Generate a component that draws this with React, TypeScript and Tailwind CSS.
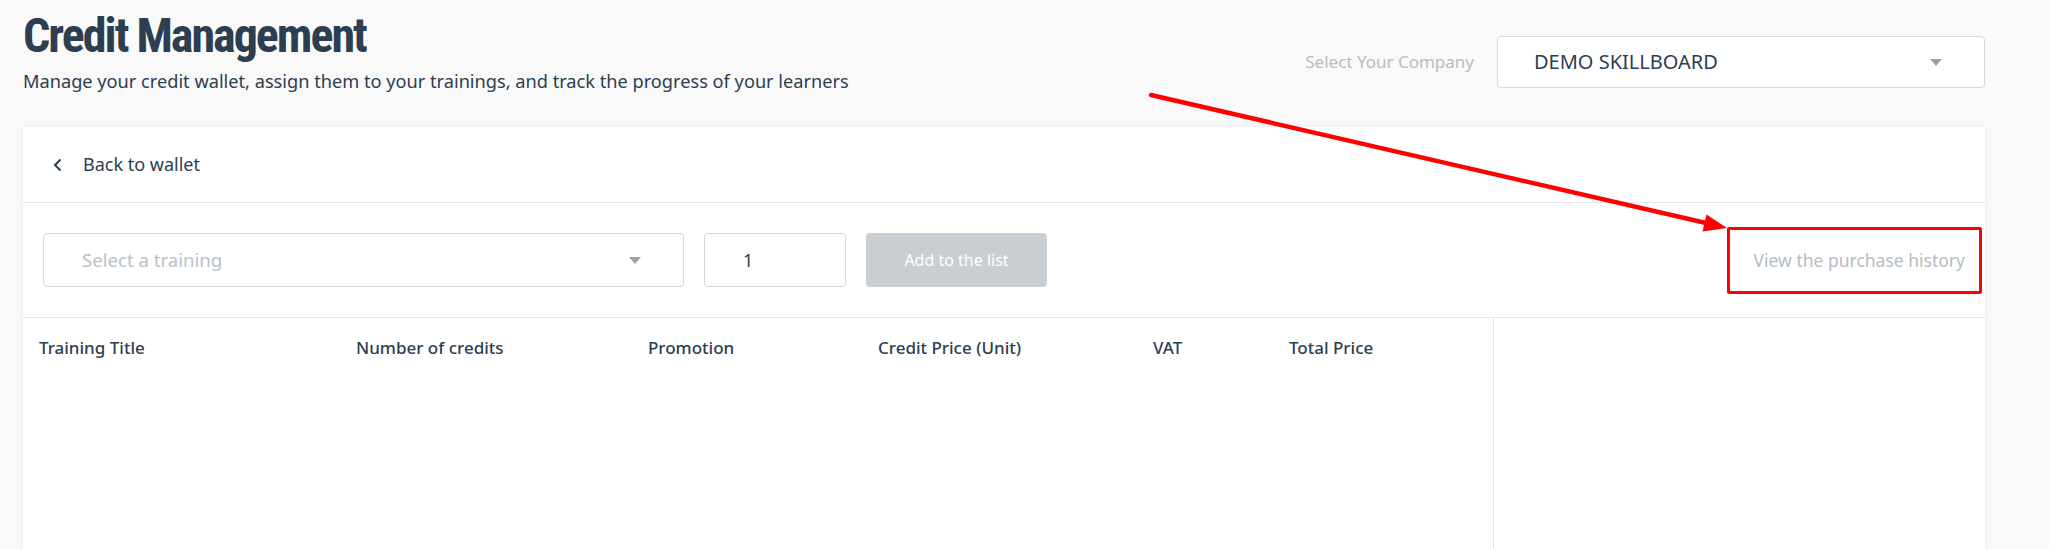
const columns = [
  "Training Title",
  "Number of credits",
  "Promotion",
  "Credit Price (Unit)",
  "VAT",
  "Total Price",
];

const Caret = () => (
  <svg width="12" height="7" viewBox="0 0 12 7" className="shrink-0">
    <polygon points="0,0 12,0 6,7" fill="#9aa1a8" />
  </svg>
);

const App = () => {
  return (
    <div className="relative flex h-[549px] flex-col overflow-hidden bg-[#f9f9f9] pl-[23px] pr-[64px] pt-[8px] font-['Noto_Sans',sans-serif] text-[#2c3e50]">
      <div className="flex items-start justify-between">
        <div>
          <h1 className="font-['Roboto_Condensed','Liberation_Sans',sans-serif] text-[48px] font-bold leading-[56px] tracking-[-2px] text-[#2c3e50]">
            Credit Management
          </h1>
          <p className="mt-[5px] text-[18.2px] leading-[24px]">
            Manage your credit wallet, assign them to your trainings, and track the progress of your learners
          </p>
        </div>
        <div className="mt-[28px] flex items-center gap-[23px]">
          <span className="text-[17px] text-[#b7bdc4]">Select Your Company</span>
          <div className="flex h-[52px] w-[488px] items-center justify-between rounded-[4px] border border-[#d3d8dd] bg-white pl-[36px] pr-[42px]">
            <span className="text-[20px]">DEMO SKILLBOARD</span>
            <Caret />
          </div>
        </div>
      </div>

      <div className="mt-[34px] flex flex-1 flex-col bg-white shadow-[0_0_6px_rgba(0,0,0,0.08)]">
        <div className="flex h-[76px] items-center gap-[20px] border-b border-[#e4e6e8] pl-[30px]">
          <svg width="10" height="14" viewBox="0 0 10 14" className="shrink-0">
            <polyline points="7.5,1.5 2,7 7.5,12.5" fill="none" stroke="#2c3e50" strokeWidth="2" />
          </svg>
          <span className="text-[18px]">Back to wallet</span>
        </div>

        <div className="flex h-[115px] items-center border-b border-[#e4e6e8] px-[20px]">
          <div className="flex h-[54px] w-[641px] items-center justify-between rounded-[4px] border border-[#d3d8dd] pl-[38px] pr-[42px]">
            <span className="text-[18.6px] text-[#b9c0c7]">Select a training</span>
            <Caret />
          </div>
          <div className="ml-[20px] flex h-[54px] w-[142px] items-center rounded-[4px] border border-[#d3d8dd] pl-[38px] text-[18px]">
            1
          </div>
          <button className="ml-[20px] h-[54px] w-[181px] rounded-[4px] bg-[#c9ced2] text-[16px] text-white">
            Add to the list
          </button>
          <span className="ml-auto text-[17.5px] text-[#b5bcc3]">View the purchase history</span>
        </div>

        <div className="flex flex-1">
          <div className="w-[1471px] border-r border-[#e4e6e8]">
            <div className="grid h-[60px] grid-cols-[317px_292px_230px_275px_136px_1fr] items-center pl-[16px] text-[17px] font-medium">
              {columns.map((c) => (
                <span key={c}>{c}</span>
              ))}
            </div>
          </div>
          <div className="flex-1" />
        </div>
      </div>

      {/* annotation */}
      <div className="absolute left-[1727px] top-[227px] h-[67px] w-[255px] rounded-[2px] border-[3px] border-[#ff0000]" />
      <svg className="pointer-events-none absolute left-0 top-0" width="2049" height="549">
        <line x1="1151" y1="95" x2="1706" y2="223" stroke="#ff0000" strokeWidth="4.5" strokeLinecap="round" />
        <polygon points="1727,228 1702.5,231.5 1706.5,214.5" fill="#ff0000" />
      </svg>
    </div>
  );
};

export default App;
